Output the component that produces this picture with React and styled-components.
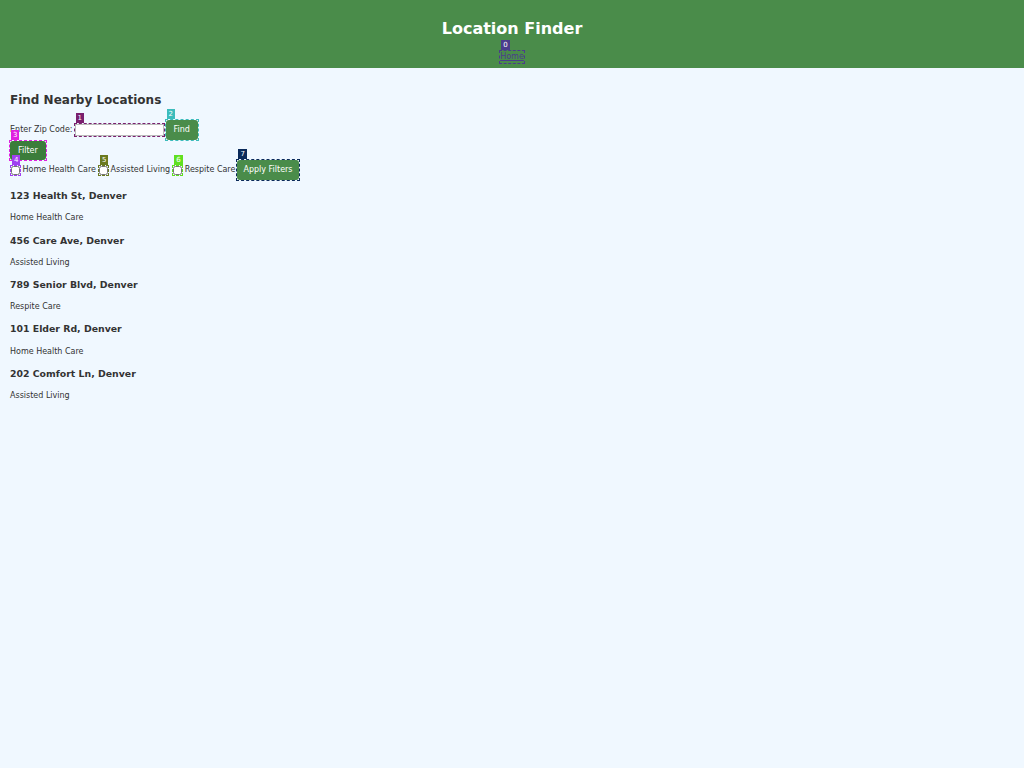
import React from "react";
import styled, { createGlobalStyle } from "styled-components";

const Global = createGlobalStyle`
  html, body { margin: 0; padding: 0; }
  body {
    background: #f0f8ff;
    color: #333;
    font-family: "DejaVu Sans", "Noto Sans", sans-serif;
    font-size: 8px;
    line-height: 1.5;
  }
`;

const Header = styled.header`
  background: #4a8c4a;
  color: #fff;
  text-align: center;
  padding: 17px 0 5px;
`;

const Title = styled.h1`
  font-size: 16px;
  line-height: 24px;
  margin: 0 0 10px;
  font-weight: bold;
`;

const Nav = styled.nav`
  line-height: 12px;
  height: 12px;
`;

const NavLink = styled.a`
  color: #4b3c8c;
  text-decoration: underline;
  font-size: 8px;
`;

const Main = styled.main`
  padding: 10px;
`;

const Heading = styled.h2`
  font-size: 12px;
  line-height: 18px;
  margin: 13px 0 10px;
  font-weight: bold;
`;

const ZipRow = styled.div`
  display: flex;
  align-items: center;
  gap: 2px;
  height: 21px;
`;

const Label = styled.label`
  font-size: 8px;
`;

const ZipInput = styled.input`
  box-sizing: border-box;
  width: 89px;
  height: 12px;
  padding: 0 2px;
  border: 1px solid #bbb;
  background: #fff;
  font: 8px "DejaVu Sans", sans-serif;
`;

const Button = styled.button`
  background: ${(p) => (p.$dark ? "#3b7d3b" : "#4a8c4a")};
  color: #fff;
  border: none;
  border-radius: 3px;
  font: 8px/10px "DejaVu Sans", sans-serif;
  height: ${(p) => p.$h || "19px"};
  padding: ${(p) => p.$pad || "0 8px"};
  cursor: pointer;
`;

const FilterToggleRow = styled.div`
  display: flex;
  padding-top: 1px;
`;

const FilterRow = styled.div`
  display: flex;
  align-items: center;
  height: 20px;
  gap: 2px;
`;

const CheckLabel = styled.label`
  display: flex;
  align-items: center;
  gap: 2.5px;
  font-size: 8px;
  margin-left: 1px;
`;

const Check = styled.input`
  width: 9px;
  height: 9px;
  margin: 0;
`;

const Marked = styled.span`
  position: relative;
  display: inline-flex;
  outline: 1px dashed ${(p) => p.$color};
`;

const Badge = styled.span`
  position: absolute;
  left: 1px;
  bottom: calc(100% + 1px);
  background: ${(p) => p.$color};
  color: #fff;
  font: 7px/10px "DejaVu Sans", sans-serif;
  padding: 0 2px;
  pointer-events: none;
`;

const LocationTitle = styled.h3`
  font-size: 9.36px;
  line-height: 14px;
  margin: 9.2px 0;
  font-weight: bold;
`;

const LocationType = styled.p`
  font-size: 8px;
  line-height: 12px;
  margin: 8px 0;
`;

const Mark = ({ n, color, children }) => (
  <Marked $color={color}>
    <Badge $color={color}>{n}</Badge>
    {children}
  </Marked>
);

const locations = [
  ["123 Health St, Denver", "Home Health Care"],
  ["456 Care Ave, Denver", "Assisted Living"],
  ["789 Senior Blvd, Denver", "Respite Care"],
  ["101 Elder Rd, Denver", "Home Health Care"],
  ["202 Comfort Ln, Denver", "Assisted Living"],
];

const filters = [
  ["Home Health Care", 4, "#a040f0"],
  ["Assisted Living", 5, "#6b7a20"],
  ["Respite Care", 6, "#60e020"],
];

export default function App() {
  return (
    <>
      <Global />
      <Header>
        <Title>Location Finder</Title>
        <Nav>
          <Mark n={0} color="#4b3c8c">
            <NavLink href="#">Home</NavLink>
          </Mark>
        </Nav>
      </Header>
      <Main>
        <Heading>Find Nearby Locations</Heading>
        <ZipRow>
          <Label htmlFor="zip">Enter Zip Code:</Label>
          <Mark n={1} color="#7a1f6e">
            <ZipInput id="zip" type="text" />
          </Mark>
          <Mark n={2} color="#3cbcbc">
            <Button $h="20px">Find</Button>
          </Mark>
        </ZipRow>
        <FilterToggleRow>
          <Mark n={3} color="#e020e0">
            <Button $dark>Filter</Button>
          </Mark>
        </FilterToggleRow>
        <FilterRow>
          {filters.map(([name, n, color]) => (
            <CheckLabel key={name}>
              <Mark n={n} color={color}>
                <Check type="checkbox" />
              </Mark>
              {name}
            </CheckLabel>
          ))}
          <Mark n={7} color="#0a2a5a">
            <Button $h="20px" $pad="0 6px">Apply Filters</Button>
          </Mark>
        </FilterRow>
        {locations.map(([addr, type]) => (
          <div key={addr}>
            <LocationTitle>{addr}</LocationTitle>
            <LocationType>{type}</LocationType>
          </div>
        ))}
      </Main>
    </>
  );
}
